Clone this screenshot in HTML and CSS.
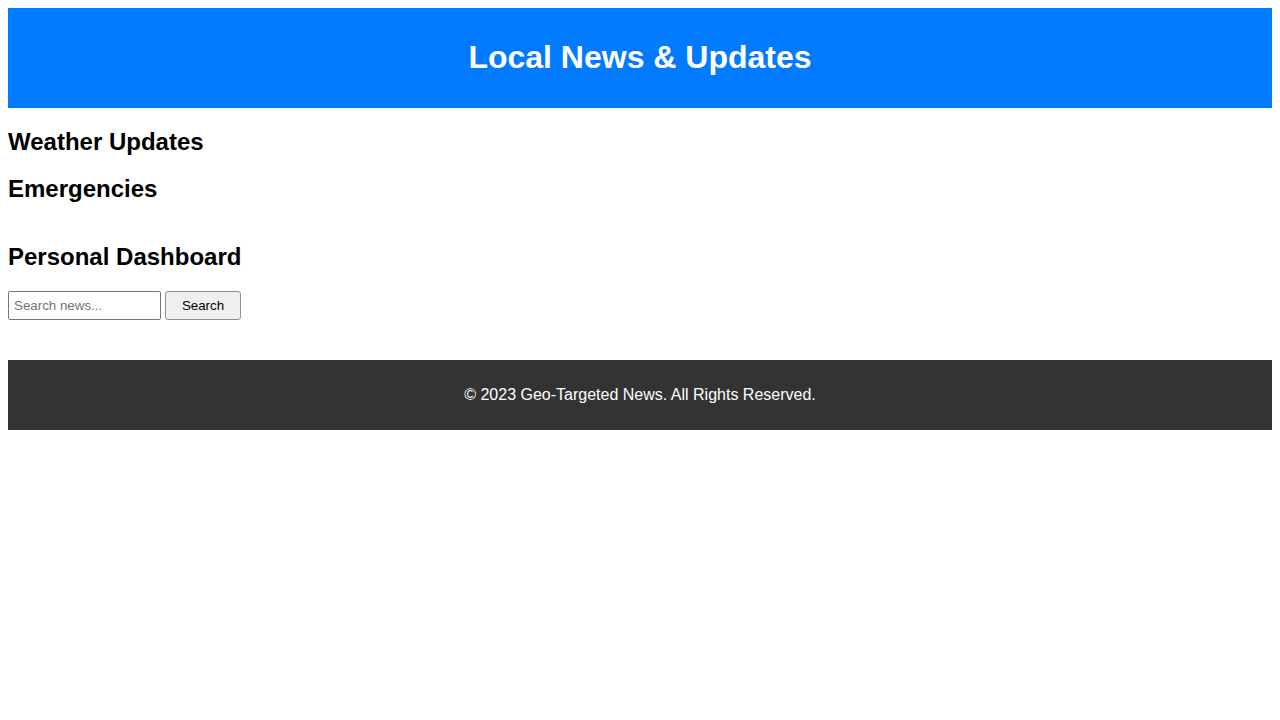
FILE: index.html
```html
<!DOCTYPE html>
<html lang="en">
<head>
<meta charset="utf-8">
<title>Local News &amp; Updates</title>
<link rel="stylesheet" href="styles.css">
</head>
<body>
<header class="site-header">
  <h1 class="site-title">Local News &amp; Updates</h1>
</header>
<main class="content">
  <section class="section">
    <h2 class="section-title">Weather Updates</h2>
  </section>
  <section class="section">
    <h2 class="section-title">Emergencies</h2>
  </section>
  <section class="section dashboard">
    <h2 class="section-title">Personal Dashboard</h2>
    <form class="search-form" onsubmit="return false">
      <input class="search-input" type="text" placeholder="Search news...">
      <button class="search-button" type="submit">Search</button>
    </form>
  </section>
</main>
<footer class="site-footer">
  <p class="footer-text">&copy; 2023 Geo-Targeted News. All Rights Reserved.</p>
</footer>
</body>
</html>
```
FILE: styles.css
```css
body {
  margin: 8px;
  font-family: "Liberation Sans", Arial, sans-serif;
  color: #000;
  background: #fff;
}

.site-header {
  background: #007bff;
  color: #fff;
  padding: 10px;
  text-align: center;
}

.site-title {
  margin: 21.44px 0;
  font-size: 32px;
  line-height: 37px;
  font-weight: bold;
}

.section-title {
  margin: 19.92px 0;
  font-size: 24px;
  line-height: 27.6px;
  font-weight: bold;
}

.dashboard {
  display: flow-root;
  margin-bottom: 40px;
}

.search-form {
  display: flex;
  gap: 4px;
  align-items: stretch;
  padding-top: 1px;
}

.search-input {
  box-sizing: border-box;
  width: 153px;
  height: 29px;
  padding: 5px;
  font-family: "Liberation Sans", Arial, sans-serif;
  font-size: 13.33px;
  border: 1px solid #767676;
  border-radius: 2px;
  background: #fff;
  color: #000;
}

.search-input::placeholder {
  color: #757575;
}

.search-button {
  box-sizing: border-box;
  width: 76px;
  height: 29px;
  padding: 5px 15px;
  font-family: "Liberation Sans", Arial, sans-serif;
  font-size: 13.33px;
  color: #000;
  background: #efefef;
  border: 1px solid #8f8f8f;
  border-radius: 3px;
}

.site-footer {
  background: #333;
  color: #fff;
  padding: 10px;
  text-align: center;
  box-shadow: 0 1px 0 #b4b4b4;
}

.footer-text {
  margin: 16px 0;
  font-size: 16px;
  line-height: 18px;
}
```
